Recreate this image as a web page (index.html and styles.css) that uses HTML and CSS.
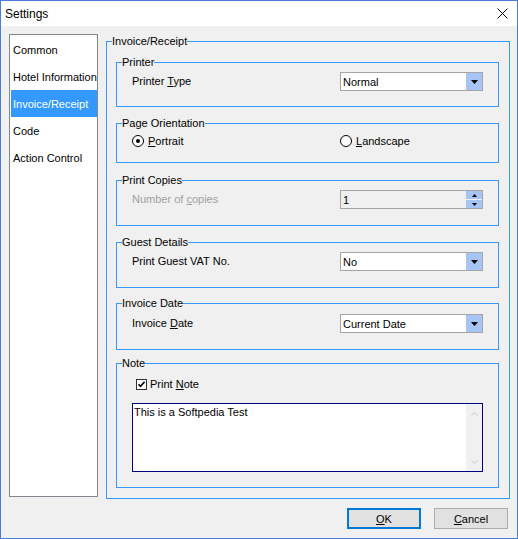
FILE: index.html
```html
<!DOCTYPE html>
<html>
<head>
<meta charset="utf-8">
<title>Settings</title>
<link rel="stylesheet" href="styles.css">
</head>
<body>
<div class="window">
  <div class="titlebar">
    <span class="title">Settings</span>
    <svg class="close" width="11" height="11" viewBox="0 0 11 11"><path d="M0.5 0.5L10.5 10.5M10.5 0.5L0.5 10.5" stroke="#000" stroke-width="1" fill="none"/></svg>
  </div>
  <div class="client">
    <div class="main">
      <ul class="nav">
        <li>Common</li>
        <li>Hotel Information</li>
        <li class="sel">Invoice/Receipt</li>
        <li>Code</li>
        <li>Action Control</li>
      </ul>
      <fieldset class="outer">
        <legend>Invoice/Receipt</legend>
        <div class="outer-body">
          <fieldset class="grp g-printer">
            <legend>Printer</legend>
            <div class="body">
              <div class="row">
                <span class="lbl">Printer <u>T</u>ype</span>
                <div class="combo"><span class="val">Normal</span><span class="drop"><svg width="7" height="4" viewBox="0 0 7 4"><path d="M0 0H7L3.5 4Z" fill="#000"/></svg></span></div>
              </div>
            </div>
          </fieldset>
          <fieldset class="grp g-orient">
            <legend>Page Orientation</legend>
            <div class="body">
              <div class="row">
                <span class="radio"><span class="dot on"></span><span><u>P</u>ortrait</span></span>
                <span class="radio"><span class="dot"></span><span><u>L</u>andscape</span></span>
              </div>
            </div>
          </fieldset>
          <fieldset class="grp g-copies">
            <legend>Print Copies</legend>
            <div class="body">
              <div class="row">
                <span class="lbl disabled">Number of <u>c</u>opies</span>
                <div class="combo spin"><span class="val">1</span><span class="spin-btns"><span class="sbtn"><svg width="5" height="3" viewBox="0 0 5 3"><path d="M0 3H5L2.5 0Z" fill="#000"/></svg></span><span class="sbtn"><svg width="5" height="3" viewBox="0 0 5 3"><path d="M0 0H5L2.5 3Z" fill="#000"/></svg></span></span></div>
              </div>
            </div>
          </fieldset>
          <fieldset class="grp g-guest">
            <legend>Guest Details</legend>
            <div class="body">
              <div class="row">
                <span class="lbl">Print Guest VAT No.</span>
                <div class="combo"><span class="val">No</span><span class="drop"><svg width="7" height="4" viewBox="0 0 7 4"><path d="M0 0H7L3.5 4Z" fill="#000"/></svg></span></div>
              </div>
            </div>
          </fieldset>
          <fieldset class="grp g-date">
            <legend>Invoice Date</legend>
            <div class="body">
              <div class="row">
                <span class="lbl">Invoice <u>D</u>ate</span>
                <div class="combo"><span class="val">Current Date</span><span class="drop"><svg width="7" height="4" viewBox="0 0 7 4"><path d="M0 0H7L3.5 4Z" fill="#000"/></svg></span></div>
              </div>
            </div>
          </fieldset>
          <fieldset class="grp g-note">
            <legend>Note</legend>
            <div class="body">
              <div class="check-row">
                <span class="checkbox"><svg width="9" height="9" viewBox="0 0 9 9"><path d="M1.5 4.2L3.5 6.4L7.6 1.8" stroke="#000" stroke-width="1.6" fill="none"/></svg></span>
                <span>Print <u>N</u>ote</span>
              </div>
              <div class="memo">
                <div class="memo-text">This is a Softpedia Test</div>
                <div class="memo-scroll">
                  <svg width="7" height="4" viewBox="0 0 7 4"><path d="M0.5 3.5L3.5 0.5L6.5 3.5" stroke="#c4c4c4" stroke-width="1" fill="none"/></svg>
                  <svg width="7" height="4" viewBox="0 0 7 4"><path d="M0.5 0.5L3.5 3.5L6.5 0.5" stroke="#c4c4c4" stroke-width="1" fill="none"/></svg>
                </div>
              </div>
            </div>
          </fieldset>
        </div>
      </fieldset>
    </div>
    <div class="buttons">
      <button class="btn default"><u>O</u>K</button>
      <button class="btn"><u>C</u>ancel</button>
    </div>
  </div>
</div>
</body>
</html>
```

FILE: styles.css
```css
* { box-sizing: border-box; }
html, body { margin: 0; padding: 0; }
body {
  font-family: "Liberation Sans", Arial, sans-serif;
  font-size: 11px;
  color: #000;
  background: #f0f0f0;
}
.window {
  position: relative;
  width: 518px;
  height: 539px;
  border: 1px solid #4a7fd6;
  background: #f0f0f0;
  display: flex;
  flex-direction: column;
  overflow: hidden;
}
.titlebar {
  flex: none;
  height: 25px;
  background: #fff;
  display: flex;
  align-items: center;
  justify-content: space-between;
  padding: 0 9px 0 4px;
}
.title { font-size: 12px; }
.close { display: block; }

.client {
  flex: 1;
  display: flex;
  flex-direction: column;
  padding: 8px 7px 9px 8px;
}
.main {
  display: flex;
  align-items: flex-start;
  gap: 8px;
  height: 465px;
}
.nav {
  list-style: none;
  margin: 0;
  width: 89px;
  height: 463px;
  flex: none;
  border: 1px solid #828790;
  background: #fff;
  padding: 1px 0 0 1px;
}
.nav li {
  height: 27px;
  line-height: 28px;
  padding-left: 2px;
  white-space: nowrap;
  overflow: hidden;
}
.nav li.sel { background: #3399ff; color: #fff; }

fieldset {
  margin: 0;
  padding: 0;
  min-width: 0;
  border: 1px solid #3399ff;
}
legend {
  padding: 0;
  margin-left: 5px;
  height: 14px;
  line-height: 14px;
}
.outer { width: 404px; height: 465px; flex: none; }
.outer-body {
  display: flex;
  flex-direction: column;
  padding: 7px 10px 10px 9px;
}
.grp .body { padding: 3px 15px 15px 15px; }
.g-orient { margin-top: 9px; }
.g-orient .body { padding-top: 4px; padding-bottom: 14px; }
.g-copies { margin-top: 10px; }
.g-copies .body { padding-bottom: 16px; }
.g-guest { margin-top: 9px; }
.g-guest .body { padding-bottom: 16px; }
.g-date { margin-top: 8px; }
.g-date .body { padding-top: 4px; padding-bottom: 16px; }
.g-note { margin-top: 6px; }
.g-note .body { padding-top: 7px; padding-bottom: 15px; }

.row {
  display: grid;
  grid-template-columns: 1fr 143px;
  align-items: center;
  line-height: 14px;
}
.lbl { line-height: 14px; margin-top: -1px; }
.disabled { color: #a0a0a0; }

.combo {
  height: 19px;
  border: 1px solid #a5a5a5;
  background: #fff;
  display: flex;
  align-items: center;
  padding-left: 2px;
}
.combo .val { flex: 1; }
.drop {
  width: 16px;
  height: 17px;
  background: #a6c4f6;
  display: flex;
  align-items: center;
  justify-content: center;
}
.drop svg { display: block; }
.spin { background: #f0f0f0; }
.spin-btns {
  width: 16px;
  height: 17px;
  display: flex;
  flex-direction: column;
  gap: 1px;
}
.sbtn {
  height: 8px;
  background: #a6c4f6;
  display: flex;
  align-items: center;
  justify-content: center;
}
.sbtn svg { display: block; }

.radio {
  display: flex;
  align-items: center;
  gap: 4px;
  height: 14px;
}
.dot {
  width: 12px;
  height: 12px;
  border: 1px solid #000;
  border-radius: 50%;
  background: #fff;
  display: flex;
  align-items: center;
  justify-content: center;
}
.dot.on::after {
  content: "";
  width: 4px;
  height: 4px;
  border-radius: 50%;
  background: #000;
}

.check-row {
  display: flex;
  align-items: center;
  gap: 3px;
  height: 14px;
  padding-left: 4px;
}
.checkbox {
  width: 11px;
  height: 11px;
  border: 1px solid #333;
  background: #fff;
  display: flex;
  align-items: center;
  justify-content: center;
}
.checkbox svg { display: block; }

.memo {
  margin-top: 12px;
  height: 69px;
  border: 1px solid #000080;
  background: #fff;
  display: flex;
}
.memo-text { flex: 1; padding: 1px 1px; line-height: 14px; }
.memo-scroll {
  width: 16px;
  background: #f0f0f0;
  display: flex;
  flex-direction: column;
  justify-content: space-between;
  align-items: center;
  padding: 8px 0 7px;
}
.memo-scroll svg { display: block; }

.buttons {
  display: flex;
  justify-content: flex-end;
  gap: 13px;
  margin-top: 9px;
  padding-right: 2px;
}
.btn {
  width: 74px;
  height: 21px;
  border: 1px solid #adadad;
  background: #e1e1e1;
  font-family: inherit;
  font-size: 11px;
  color: #000;
  padding: 0;
}
.btn.default { border: 2px solid #0078d7; }
```
